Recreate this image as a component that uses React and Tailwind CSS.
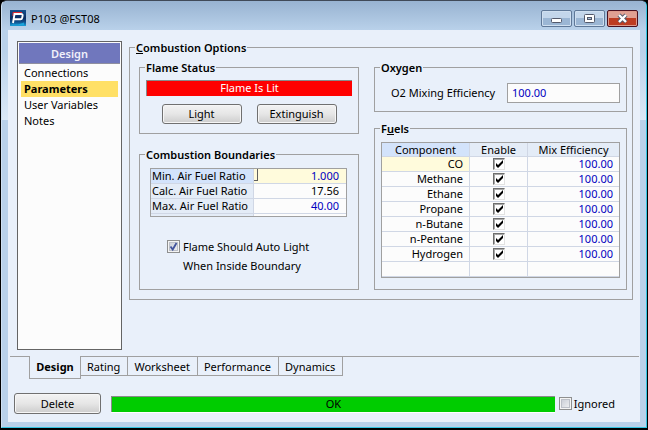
const fuels = ["CO", "Methane", "Ethane", "Propane", "n-Butane", "n-Pentane", "Hydrogen"];
const tabs = ["Rating", "Worksheet", "Performance", "Dynamics"];
const pages = ["Connections", "Parameters", "User Variables", "Notes"];

function Group({ title, className = "", children }) {
  return (
    <fieldset className={`min-w-0 border border-[#a0a0a0] ${className}`}>
      <legend className="ml-[5px] px-px leading-[15px] font-semibold">{title}</legend>
      {children}
    </fieldset>
  );
}

function PushButton({ className = "", children }) {
  return (
    <button
      type="button"
      className={`rounded-[3px] border border-[#707070] bg-linear-to-b from-[#f3f3f3] from-0% via-[#e6e6e6] via-50% to-[#cdcdcd] text-center leading-[16px] shadow-[inset_0_0_0_1px_#f6f6f6] ${className}`}
    >
      {children}
    </button>
  );
}

function CellCheck({ label }) {
  return (
    <span className="mx-auto grid size-3">
      <input
        type="checkbox"
        defaultChecked
        aria-label={label}
        className="peer col-start-1 row-start-1 size-3 appearance-none border border-t-[#6e6e6e] border-r-[#e2e2e2] border-b-[#e2e2e2] border-l-[#6e6e6e] bg-white shadow-[inset_1px_1px_0_#a8a8a8]"
      />
      <svg viewBox="0 0 12 12" className="pointer-events-none invisible col-start-1 row-start-1 size-3 peer-checked:visible" aria-hidden="true">
        <path d="M3 5v3l2 2 5-5V2L5 7z" fill="#000" />
      </svg>
    </span>
  );
}

function AeroCheck({ id, checked }) {
  return (
    <span className="grid size-[13px] shrink-0">
      <input
        id={id}
        type="checkbox"
        defaultChecked={checked}
        className="peer col-start-1 row-start-1 size-[13px] appearance-none border border-[#8e8f8f] bg-linear-to-br from-[#c3c8d2] to-[#f6f6f6] shadow-[inset_0_0_0_1px_#f4f4f4,inset_0_0_0_2px_#bcc0c8]"
      />
      <svg viewBox="0 0 13 13" className="pointer-events-none invisible col-start-1 row-start-1 size-[13px] peer-checked:visible" aria-hidden="true">
        <path d="M3.5 6.5 5.7 9.5 9.5 3" fill="none" stroke="#42549c" strokeWidth="1.8" />
      </svg>
    </span>
  );
}

function TitleBar() {
  return (
    <header className="flex h-[29px] items-start bg-linear-to-b from-[#98b3d1] to-[#b9d1ea] pr-2 pl-2">
      <svg viewBox="0 0 16 16" className="mt-[9px] size-4" aria-hidden="true">
        <defs>
          <linearGradient id="logo" x1="0" y1="0" x2="0" y2="1">
            <stop offset="0" stopColor="#15508c" />
            <stop offset="0.5" stopColor="#0b2c60" />
            <stop offset="0.75" stopColor="#0f4f8c" />
            <stop offset="1" stopColor="#1ba3dc" />
          </linearGradient>
        </defs>
        <rect width="16" height="16" fill="url(#logo)" />
        <path d="M2 14.5h6l6-2v2.5H2z" fill="#19b5ea" opacity=".7" />
        <path d="M3 6V2.500h9" fill="none" stroke="#e0262c" strokeWidth="1" />
        <path d="M3 13 4.500 4h6.500q1.900 0 1.600 1.600l-.4 2.200Q11.900 9.300 10.400 9.300H4.600" fill="none" stroke="#fff" strokeWidth="1.900" />
      </svg>
      <h1 className="mt-[9px] ml-[5px] flex-1 leading-[18px]">P103 @FST08</h1>
      <div className="mt-[9px] flex gap-[2px]">
        <button type="button" aria-label="Minimize" className="grid h-[17px] w-[31px] place-items-center rounded-[2px] border border-[#5f7898] bg-linear-to-b from-[#c3d6eb] from-50% to-[#9bb6d4] to-50% shadow-[inset_0_0_0_1px_#cfdff0]">
          <svg viewBox="0 0 13 11" className="h-[11px] w-[13px]" aria-hidden="true">
            <rect x="1.500" y="5.500" width="10" height="4" rx="1" fill="#fff" stroke="#53596b" />
          </svg>
        </button>
        <button type="button" aria-label="Maximize" className="grid h-[17px] w-[31px] place-items-center rounded-[2px] border border-[#5f7898] bg-linear-to-b from-[#c3d6eb] from-50% to-[#9bb6d4] to-50% shadow-[inset_0_0_0_1px_#cfdff0]">
          <svg viewBox="0 0 13 11" className="h-[11px] w-[13px]" aria-hidden="true">
            <rect x="1.500" y="1.500" width="10" height="8" rx="1" fill="#fff" stroke="#53596b" />
            <rect x="4.500" y="4.500" width="4" height="2" fill="#a9c1dc" stroke="#53596b" />
          </svg>
        </button>
        <button type="button" aria-label="Close" className="grid h-[17px] w-[31px] place-items-center rounded-[2px] border border-[#4a1020] bg-linear-to-b from-[#e0a093] from-45% to-[#bd3c22] to-45% shadow-[inset_0_0_0_1px_#dd9a8c]">
          <svg viewBox="0 0 13 11" className="h-[11px] w-[13px]" aria-hidden="true">
            <path d="M3 2l7 7M10 2 3 9" stroke="#53596b" strokeWidth="4.200" />
            <path d="M3 2l7 7M10 2 3 9" stroke="#fff" strokeWidth="2.400" />
          </svg>
        </button>
      </div>
    </header>
  );
}

export default function App() {
  const tableLine = "border-[#d0d7e5]";
  return (
    <div className="flex min-h-screen flex-col bg-black pr-px pl-px pb-[2px] text-[11px] text-black [font-family:'Noto_Sans','Open_Sans',sans-serif]">
      <div className="flex flex-1 flex-col overflow-hidden rounded-t-[6px] border border-t-[#404a58] border-r-[#35c5e2] border-b-[#35c5e2] border-l-[#cfe0f2] bg-linear-to-b from-[#b9d1ea] from-[50px] via-[#dbe9f7] via-[119px] to-[#b9d1ea] to-[119px]">
        <TitleBar />
        <main className="mx-[6px] mb-[5px] flex flex-1 flex-col bg-[#e9f0fa]">
          <div className="flex flex-1 items-stretch gap-[7px] pr-[7px] pb-[6px] pl-[9px]">
            <nav className="mt-[11px] w-[105px] shrink-0 border border-[#646464] bg-[#fcfcfc] p-px leading-[16px]">
              <h2 className="border-b border-[#8f8f9f] bg-[#7077bd] pt-[3px] pb-px text-center font-semibold text-[#f0f0fa]">Design</h2>
              <ul className="px-[2px] pt-px">
                {pages.map((p) => (
                  <li key={p}>
                    <button
                      type="button"
                      className={`block w-full pl-[3px] text-left ${p === "Parameters" ? "bg-[#ffe066] font-bold" : ""}`}
                    >
                      {p}
                    </button>
                  </li>
                ))}
              </ul>
            </nav>

            <Group title={<><u>C</u>ombustion Options</>} className="mt-[10px] flex-1 self-start">
              <div className="flex gap-[15px] pt-[5px] pr-[5px] pb-[9px] pl-[9px]">
                <div className="flex w-[220px] shrink-0 flex-col gap-[13px]">
                  <Group title="Flame Status">
                    <div className="px-[6px] pt-[5px] pb-[9px]">
                      <div className="border-t border-l border-[#8a8a8a] bg-[#ff0000] pb-px text-center leading-[14px] text-white">Flame Is Lit</div>
                      <div className="mt-2 flex justify-center gap-[15px]">
                        <PushButton className="h-5 w-20">Light</PushButton>
                        <PushButton className="h-5 w-20">Extinguish</PushButton>
                      </div>
                    </div>
                  </Group>

                  <Group title="Combustion Boundaries" className="flex-1">
                    <div className="pt-[6px] pr-[11px] pl-[10px]">
                      <table className="w-full table-fixed border-separate border-spacing-0 border border-[#a0a0a0] bg-[#fcfcfc] leading-[14px]">
                        <tbody>
                          <tr>
                            <th scope="row" className={`w-[103px] border-r border-b bg-[#d3e3fb] pl-px text-left font-normal whitespace-nowrap ${tableLine}`}>Min. Air Fuel Ratio</th>
                            <td className={`border-b bg-[#fffbdc] pr-[7px] ${tableLine}`}>
                              <div className="flex justify-between">
                                <span className="h-3 w-1 border-r border-b border-[#606060]" />
                                <span className="text-[#0000c0]">1.000</span>
                              </div>
                            </td>
                          </tr>
                          <tr>
                            <th scope="row" className={`border-r border-b bg-[#e4ecf7] pl-px text-left font-normal whitespace-nowrap ${tableLine}`}>Calc. Air Fuel Ratio</th>
                            <td className={`border-b pr-[7px] text-right ${tableLine}`}>17.56</td>
                          </tr>
                          <tr>
                            <th scope="row" className={`border-r border-b bg-[#e4ecf7] pl-px text-left font-normal whitespace-nowrap ${tableLine}`}>Max. Air Fuel Ratio</th>
                            <td className={`border-b pr-[7px] text-right text-[#0000c0] ${tableLine}`}>40.00</td>
                          </tr>
                          <tr className="h-[2px]">
                            <td className={`border-r bg-[#e4ecf7] ${tableLine}`} />
                            <td />
                          </tr>
                        </tbody>
                      </table>
                    </div>
                    <div className="mt-[22px] flex items-start gap-[3px] pl-[27px]">
                      <span className="mt-px">
                        <AeroCheck id="auto-light" checked />
                      </span>
                      <label htmlFor="auto-light" className="-mt-[2px] leading-[19px] whitespace-nowrap">
                        Flame Should Auto Light
                        <br />
                        When Inside Boundary
                      </label>
                    </div>
                  </Group>
                </div>

                <div className="flex min-w-0 flex-1 flex-col gap-[9px]">
                  <Group title="Oxygen">
                    <div className="flex items-center justify-between gap-[10px] pt-2 pr-[6px] pb-2 pl-4">
                      <label htmlFor="o2" className="leading-[20px] whitespace-nowrap">O2 Mixing Efficiency</label>
                      <input
                        id="o2"
                        defaultValue="100.00"
                        className="h-5 w-[113px] border border-[#a0a0a0] bg-[#fcfcfc] pb-[2px] pl-1 text-[#0000c0]"
                      />
                    </div>
                  </Group>

                  <Group title={<>F<u>u</u>els</>}>
                    <div className="px-[6px] pt-[6px] pb-[11px]">
                      <table className="w-full table-fixed border-separate border-spacing-0 border border-[#a0a0a0] bg-[#fcfcfc] leading-[14px]">
                        <thead>
                          <tr className="bg-[#e4ecf7] leading-[13px]">
                            <th scope="col" className={`w-[88px] border-r border-b bg-[#d3e3fb] p-0 font-normal ${tableLine}`}>Component</th>
                            <th scope="col" className={`w-[58px] border-r border-b p-0 font-normal ${tableLine}`}>Enable</th>
                            <th scope="col" className={`border-b p-0 font-normal ${tableLine}`}>Mix Efficiency</th>
                          </tr>
                        </thead>
                        <tbody>
                          {fuels.map((f, i) => (
                            <tr key={f}>
                              <td className={`border-r border-b pr-[6px] text-right ${tableLine} ${i === 0 ? "bg-[#fffbdc]" : ""}`}>{f}</td>
                              <td className={`border-r border-b ${tableLine}`}><CellCheck label={`Enable ${f}`} /></td>
                              <td className={`border-b pr-[6px] text-right text-[#0000c0] ${tableLine}`}>100.00</td>
                            </tr>
                          ))}
                          <tr className="h-[15px]">
                            <td className={`border-r border-b ${tableLine}`} />
                            <td className={`border-r border-b ${tableLine}`} />
                            <td className={`border-b ${tableLine}`} />
                          </tr>
                        </tbody>
                      </table>
                    </div>
                  </Group>
                </div>
              </div>
            </Group>
          </div>

          <div className="mr-px ml-[2px] flex items-start leading-[18px]">
            <div className="w-[19px] border-t border-[#a0a0a0]" />
            <button type="button" className="h-[23px] w-[52px] border-r border-b border-l border-[#a0a0a0] font-bold">Design</button>
            {tabs.map((t) => (
              <button
                key={t}
                type="button"
                className="h-5 border-t border-r border-b border-[#a0a0a0] pt-px pr-[7px] pl-[6px]"
              >
                {t}
              </button>
            ))}
            <div className="flex-1 border-t border-[#a0a0a0]" />
          </div>

          <footer className="mt-[14px] mb-2 flex items-center pr-[25px] pl-[6px]">
            <PushButton className="h-[21px] w-[87px]">Delete</PushButton>
            <div className="ml-[10px] flex-1 border-t border-l border-[#8a8a8a] bg-[#00cc00] pb-px text-center leading-[14px] shadow-[0_1px_0_#fff]">OK</div>
            <div className="ml-1 flex items-center gap-[2px]">
              <AeroCheck id="ignored" />
              <label htmlFor="ignored" className="leading-[16px]">Ignored</label>
            </div>
          </footer>
        </main>
      </div>
    </div>
  );
}
